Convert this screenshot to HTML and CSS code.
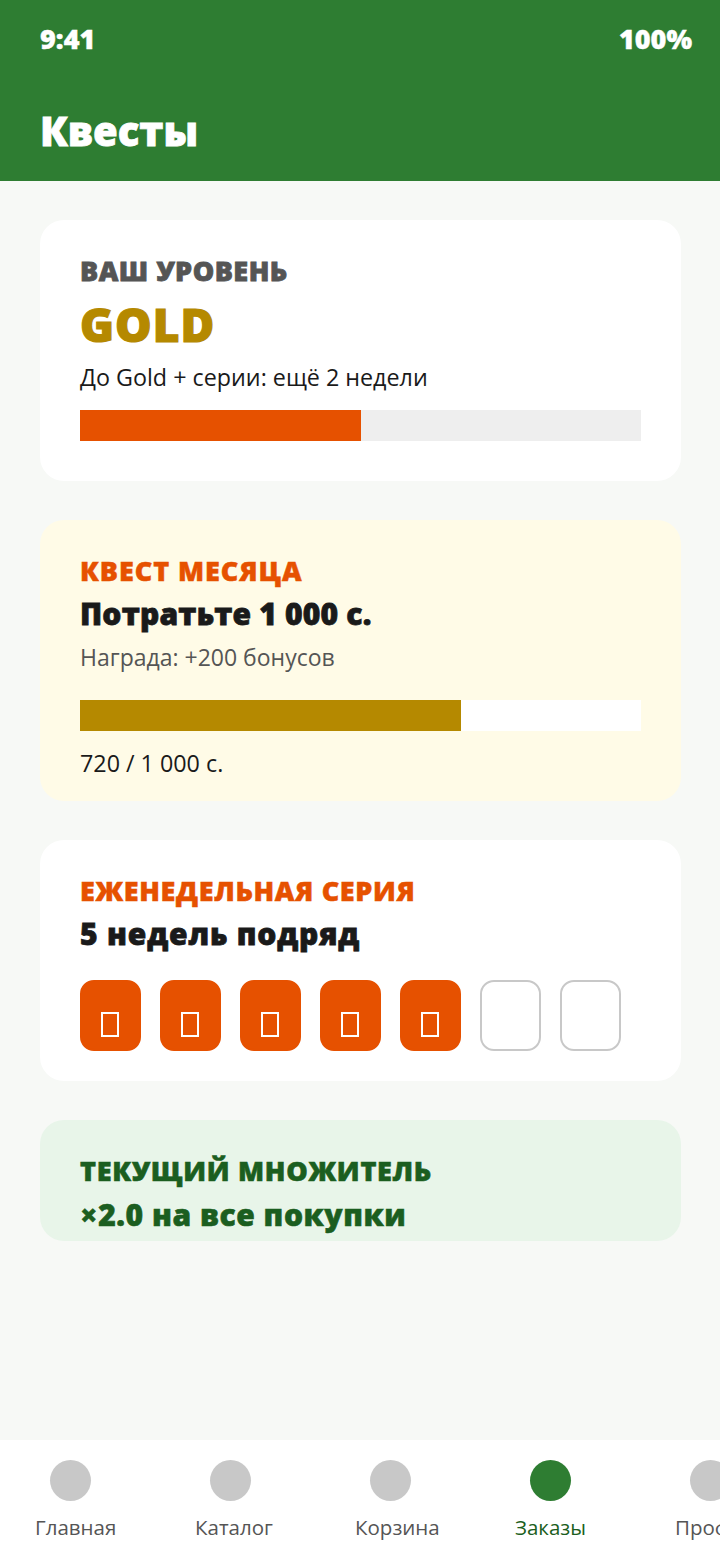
FILE: index.html
```html
<!DOCTYPE html>
<html lang="ru">
<head>
<meta charset="utf-8">
<title>Квесты</title>
<link rel="stylesheet" href="styles.css">
</head>
<body>
<div class="screen">
  <header class="header">
    <div class="status"><span>9:41</span><span>100%</span></div>
    <h1 class="title">Квесты</h1>
  </header>
  <main class="content">
    <section class="card card-level">
      <div class="eyebrow eyebrow-grey">ВАШ УРОВЕНЬ</div>
      <div class="tier">GOLD</div>
      <div class="note">До Gold + серии: ещё 2 недели</div>
      <div class="track track-grey"><div class="fill fill-orange" style="width:50%"></div></div>
    </section>
    <section class="card card-quest">
      <div class="eyebrow eyebrow-orange">КВЕСТ МЕСЯЦА</div>
      <div class="heading">Потратьте 1 000 с.</div>
      <div class="note note-muted">Награда: +200 бонусов</div>
      <div class="track track-white"><div class="fill fill-gold" style="width:68%"></div></div>
      <div class="note note-count">720 / 1 000 с.</div>
    </section>
    <section class="card card-streak">
      <div class="eyebrow eyebrow-orange">ЕЖЕНЕДЕЛЬНАЯ СЕРИЯ</div>
      <div class="heading heading-small">5 недель подряд</div>
      <div class="weeks">
        <div class="week week-on"><span class="tofu"></span></div>
        <div class="week week-on"><span class="tofu"></span></div>
        <div class="week week-on"><span class="tofu"></span></div>
        <div class="week week-on"><span class="tofu"></span></div>
        <div class="week week-on"><span class="tofu"></span></div>
        <div class="week"></div>
        <div class="week"></div>
      </div>
    </section>
    <section class="card card-multi">
      <div class="eyebrow eyebrow-green">ТЕКУЩИЙ МНОЖИТЕЛЬ</div>
      <div class="heading heading-green">×2.0 на все покупки</div>
    </section>
  </main>
  <nav class="nav">
    <div class="tab"><span class="dot"></span><span class="label">Главная</span></div>
    <div class="tab"><span class="dot"></span><span class="label">Каталог</span></div>
    <div class="tab"><span class="dot"></span><span class="label">Корзина</span></div>
    <div class="tab tab-active"><span class="dot"></span><span class="label">Заказы</span></div>
    <div class="tab"><span class="dot"></span><span class="label">Профиль</span></div>
  </nav>
</div>
</body>
</html>
```
FILE: styles.css
```css
* { box-sizing: border-box; }
html, body { margin: 0; padding: 0; }
body { font-family: "Open Sans", "Noto Sans", sans-serif; color: #1a1a1a; }
.screen { width: 720px; height: 1560px; background: #f7f9f6; display: flex; flex-direction: column; overflow: hidden; }
.header { height: 181px; background: #2e7d32; color: #fff; padding: 20px 28px 0 40px; flex: none; }
.status { display: flex; justify-content: space-between; font-size: 27px; font-weight: 800; line-height: 38px; -webkit-text-stroke: 0.4px currentColor; }
.title { margin: 46px 0 0; font-size: 40px; font-weight: 800; line-height: 54px; -webkit-text-stroke: 0.8px currentColor; }
.content { flex: 1; padding: 39px 39px 0 40px; display: flex; flex-direction: column; gap: 39px; }
.card { border-radius: 24px; background: #fff; padding: 32px 40px 0; }
.card-level { height: 261px; }
.card-quest { height: 281px; background: #fffbe7; }
.card-streak { height: 241px; }
.card-multi { height: 121px; background: #e8f5e9; overflow: hidden; }
.eyebrow { font-size: 27px; font-weight: 800; line-height: 38px; letter-spacing: 0.5px; -webkit-text-stroke: 0.8px currentColor; }
.eyebrow-grey { color: #555; }
.eyebrow-orange { color: #e65100; letter-spacing: 0.65px; -webkit-text-stroke: 0.5px currentColor; }
.card-quest .eyebrow-orange { letter-spacing: 0.95px; }
.eyebrow-green { color: #1b5e20; letter-spacing: 0.7px; -webkit-text-stroke: 0.6px currentColor; }
.tier { font-size: 46px; font-weight: 800; line-height: 60px; margin-top: 4px; color: #b58900; letter-spacing: 1px; -webkit-text-stroke: 1.2px currentColor; }
.note { font-size: 23.3px; line-height: 32px; margin-top: 7px; }
.note-muted { color: #555; margin-top: 5px; font-size: 23px; }
.note-count { margin-top: 16px; }
.heading { font-size: 30px; font-weight: 800; line-height: 44px; margin-top: 2px; letter-spacing: 0.2px; -webkit-text-stroke: 0.8px currentColor; }
.heading-small { letter-spacing: 0.85px; }
.heading-green { color: #1b5e20; margin-top: 3px; letter-spacing: 0.55px; -webkit-text-stroke: 0.6px currentColor; }
.track { height: 31px; margin-top: 17px; }
.card-quest .track { margin-top: 27px; }
.track-grey { background: #eee; }
.track-white { background: #fff; }
.fill { height: 100%; }
.fill-orange { background: #e65100; }
.fill-gold { background: #b58900; }
.weeks { display: flex; gap: 19px; margin-top: 24px; }
.week { width: 61px; height: 71px; border-radius: 14px; border: 2px solid #c8c8c8; display: flex; justify-content: center; align-items: flex-start; padding-top: 30px; }
.week-on { background: #e65100; border-color: #e65100; }
.tofu { width: 18px; height: 25px; border: 2px solid #fff; margin-left: -2px; }
.nav { height: 120px; background: #fff; display: flex; flex: none; overflow: hidden; }
.tab { flex: none; width: 160px; padding: 20px 0 0 35px; display: flex; flex-direction: column; align-items: flex-start; color: #555; }
.dot { width: 41px; height: 41px; border-radius: 50%; background: #c8c8c8; margin-left: 15px; }
.label { font-size: 20.5px; line-height: 30px; margin-top: 11px; white-space: nowrap; }
.tab-active { color: #1b5e20; }
.tab-active .dot { background: #2e7d32; }
```
